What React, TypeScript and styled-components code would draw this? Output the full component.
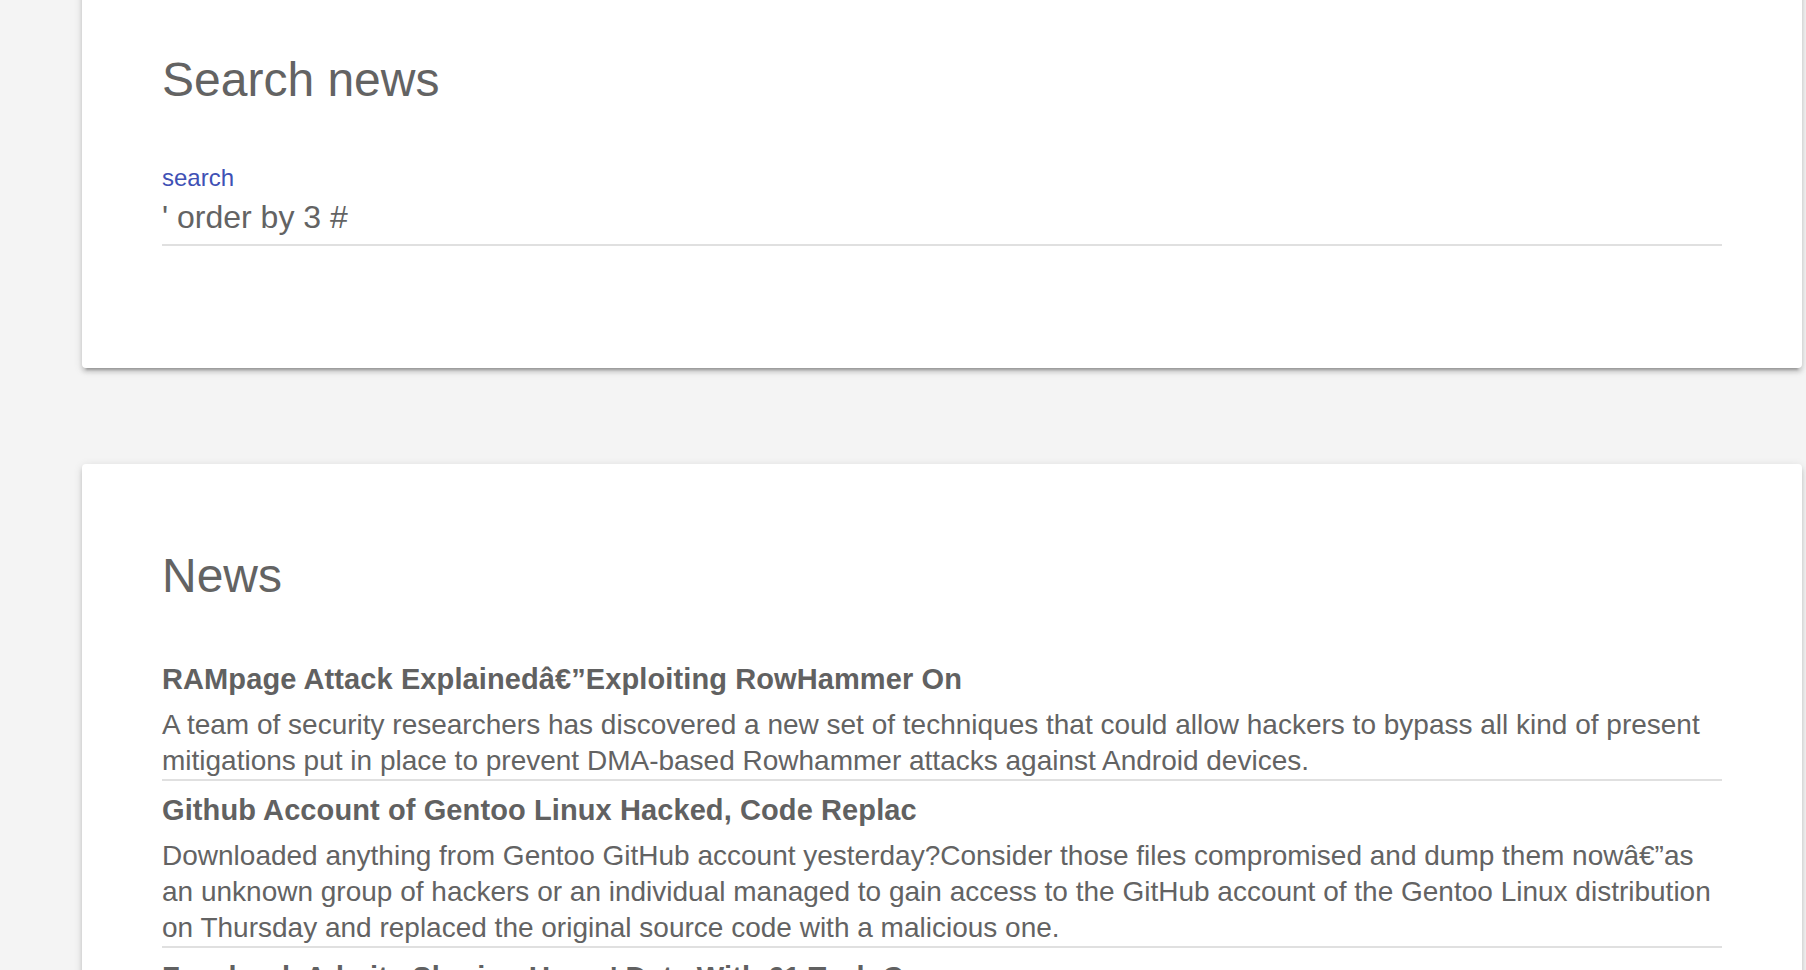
import { FC } from 'react';
import styled, { createGlobalStyle } from 'styled-components';

const GlobalStyle = createGlobalStyle`
  html, body {
    margin: 0;
    padding: 0;
    background: #f4f4f4;
    font-family: "Liberation Sans", Arial, Helvetica, sans-serif;
    color: #636363;
  }
`;

const Page = styled.div`
  display: flex;
  flex-direction: column;
  gap: 96px;
  margin-top: -16px;
  padding: 0 4px 0 82px;
`;

const Card = styled.section<{ $padding: string }>`
  background: #fff;
  border-radius: 4px;
  padding: ${({ $padding }) => $padding};
  box-shadow:
    0 4px 4px 0 rgba(0, 0, 0, 0.14),
    0 6px 2px -4px rgba(0, 0, 0, 0.2),
    0 2px 10px 0 rgba(0, 0, 0, 0.12);
`;

const CardTitle = styled.h2`
  margin: 0;
  font-size: 48px;
  line-height: 64px;
  font-weight: 400;
  color: #636363;
`;

const Field = styled.label`
  display: flex;
  flex-direction: column;
  margin-top: 52px;
  padding-bottom: 7px;
  border-bottom: 2px solid #e0e0e0;
`;

const FieldLabel = styled.span`
  font-size: 24px;
  line-height: 28px;
  margin-bottom: 5px;
  color: #3f51b5;
`;

const FieldInput = styled.input`
  height: 40px;
  padding: 0;
  border: none;
  outline: none;
  background: transparent;
  font-family: inherit;
  font-size: 32px;
  color: #636363;
`;

const NewsList = styled.ul`
  list-style: none;
  margin: 42px 0 0;
  padding: 0;
`;

const NewsItem = styled.li`
  padding-top: 11px;
  border-bottom: 2px solid #e0e0e0;
`;

const NewsTitle = styled.h3`
  margin: 0 0 10px;
  font-size: 29px;
  line-height: 36px;
  font-weight: 700;
  letter-spacing: 0.1px;
  color: #616161;
`;

const NewsText = styled.p`
  margin: 0;
  font-size: 28px;
  line-height: 36px;
  color: #636363;
`;

interface INews {
  title: string,
  text: string,
}

const news: INews[] = [
  {
    title: 'RAMpage Attack Explainedâ€\u201dExploiting RowHammer On',
    text: 'A team of security researchers has discovered a new set of techniques that could allow hackers to bypass all kind of present mitigations put in place to prevent DMA-based Rowhammer attacks against Android devices.',
  },
  {
    title: 'Github Account of Gentoo Linux Hacked, Code Replac',
    text: 'Downloaded anything from Gentoo GitHub account yesterday?Consider those files compromised and dump them nowâ€\u201das an unknown group of hackers or an individual managed to gain access to the GitHub account of the Gentoo Linux distribution on Thursday and replaced the original source code with a malicious one.',
  },
  {
    title: "Facebook Admits Sharing Users' Data With 61 Tech C",
    text: 'Facebook admitted that it gave dozens of tech companies and app developers special access to its users\u2019 data after publicly saying it had restricted outside companies to access such data back in 2015.',
  },
];

const App: FC = () => {
  return (
    <>
      <GlobalStyle />
      <Page>
        <Card $padding="64px 80px 122px">
          <CardTitle>Search news</CardTitle>
          <Field>
            <FieldLabel>search</FieldLabel>
            <FieldInput type="text" defaultValue="' order by 3 #" />
          </Field>
        </Card>

        <Card $padding="80px 80px 40px">
          <CardTitle>News</CardTitle>
          <NewsList>
            {news.map(item => (
              <NewsItem key={item.title}>
                <NewsTitle>{item.title}</NewsTitle>
                <NewsText>{item.text}</NewsText>
              </NewsItem>
            ))}
          </NewsList>
        </Card>
      </Page>
    </>
  );
};

export default App;
